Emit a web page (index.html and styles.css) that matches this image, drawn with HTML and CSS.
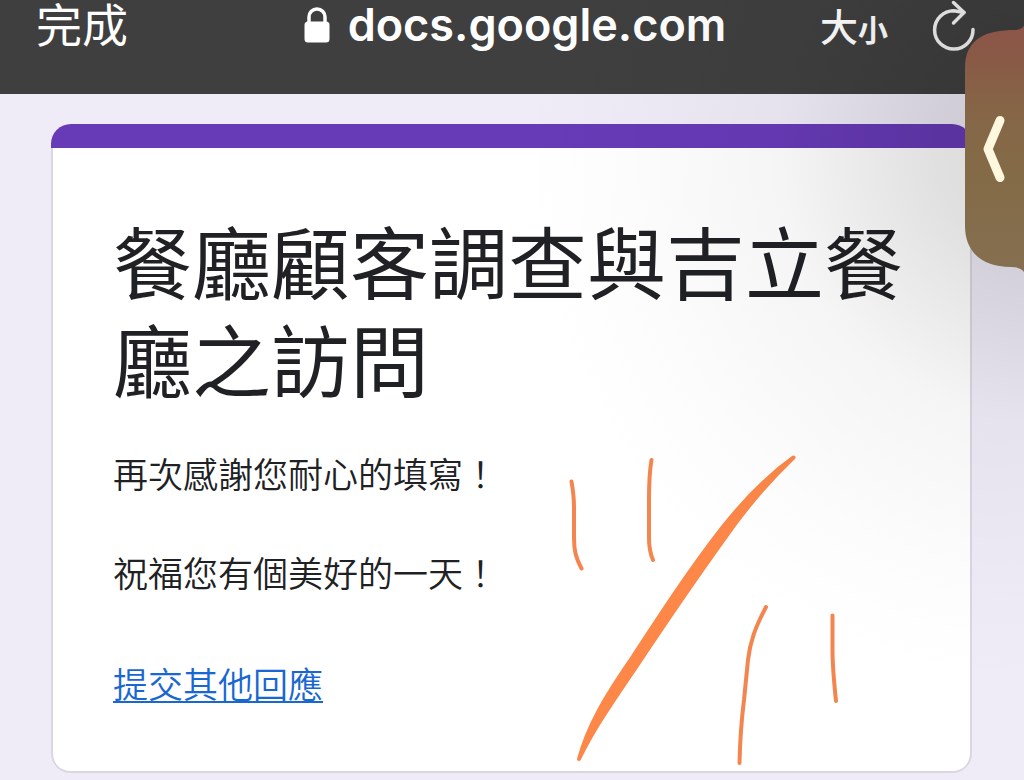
FILE: index.html
```html
<!DOCTYPE html>
<html lang="zh-Hant">
<head>
<meta charset="utf-8">
<meta name="viewport" content="width=device-width, initial-scale=1">
<title>餐廳顧客調查與吉立餐廳之訪問</title>
<link rel="stylesheet" href="styles.css">
</head>
<body>
<header class="browser-bar">
  <button class="bar-button done" type="button">完成</button>
  <div class="address">
    <svg class="lock" width="26" height="36" viewBox="0 0 26 36" aria-hidden="true">
      <path d="M5 17V10a8 8 0 0 1 16 0V17" fill="none" stroke="#fff" stroke-width="3.500"/>
      <rect x="0.500" y="14.500" width="25" height="21" rx="3.500" fill="#fff"/>
    </svg>
    <span class="domain">docs.google.com</span>
  </div>
  <div class="bar-actions">
    <button class="bar-button text-size" type="button">大<span class="small-char">小</span></button>
    <button class="bar-button reload" type="button" aria-label="重新載入">
      <svg width="44" height="52" viewBox="0 3.5 44 52" fill="none" stroke="#f4f4f4" stroke-width="3.500" stroke-linecap="round" stroke-linejoin="round" aria-hidden="true">
        <path d="M41 33A19.200 19.200 0 1 1 22 14.200L32 16"/>
        <path d="M21.500 6L32 16L21.500 26.500"/>
      </svg>
    </button>
  </div>
</header>

<main class="page">
  <section class="card">
    <h1 class="title">餐廳顧客調查與吉立餐廳之訪問</h1>
    <p class="message">再次感謝您耐心的填寫！</p>
    <p class="message">祝福您有個美好的一天！</p>
    <a class="again" href="#">提交其他回應</a>
    <svg class="ink" width="270" height="310" viewBox="568 455 270 310" fill="none" stroke="#f4854f" stroke-width="4" stroke-linecap="round" stroke-linejoin="round" aria-hidden="true">
      <path d="M571.500 481.500C573 490 574 496 574 507V538C574 551 576 558 581.500 568.500"/>
      <path d="M651.500 460C649 474 649 486 649 500V538C649 548 650 553 653 560"/>
      <path d="M766 607C755 628 750 642 748 660L744 700C741 724 740 740 739.500 763"/>
      <path d="M832.500 615.500V650C832.500 667 834 682 836 701"/>
      <path d="M793.500 457.500C766 477 745 499 722 528C690 569 660 615 630 661C604 699 588 726 579 759C592 732 608 708 636 667C666 622 696 578 727 535C749 504 769 481 793.500 457.500Z" fill="#ff8747" stroke="#fb8749" stroke-width="4"/>
    </svg>
  </section>
</main>

<div class="shade"></div>
<button class="side-handle" type="button" aria-label="展開">
  <svg width="59" height="246" viewBox="965 26 59 246" aria-hidden="true">
    <defs>
      <linearGradient id="handle-fill" x1="0" y1="0" x2="0" y2="1">
        <stop offset="0" stop-color="#8d5548"/>
        <stop offset="0.140" stop-color="#895a46"/>
        <stop offset="0.380" stop-color="#856747"/>
        <stop offset="0.620" stop-color="#846b47"/>
        <stop offset="1" stop-color="#846f50"/>
      </linearGradient>
    </defs>
    <path d="M1024 26Q1021 30 1015 30C987 30 965 38 965 68V226C965 250 980 267 1011 267Q1021 267 1024 272Z" fill="url(#handle-fill)"/>
    <path d="M1000 120.500L988 149L1000 177.500" fill="none" stroke="#fff8df" stroke-width="9" stroke-linecap="round" stroke-linejoin="round"/>
  </svg>
</button>
</body>
</html>
```
FILE: styles.css
```css
* {
  box-sizing: border-box;
}

body {
  margin: 0;
  min-height: 100vh;
  position: relative;
  overflow-x: hidden;
  background: #efebf7;
  color: #202124;
  font-family: "Noto Sans CJK TC", sans-serif;
}

.browser-bar {
  display: grid;
  grid-template-columns: 1fr auto 1fr;
  align-items: center;
  height: 94px;
  padding: 0 48px 42px 36px;
  background: #3f3f3f;
  color: #fff;
}

.bar-button {
  padding: 0;
  border: 0;
  background: none;
  color: inherit;
  font-family: inherit;
  cursor: pointer;
}

.done {
  justify-self: start;
  padding-bottom: 8px;
  font-size: 46px;
  font-weight: 400;
  line-height: 44px;
}

.address {
  display: flex;
  align-items: center;
  gap: 18px;
  padding: 0 0 2px 18px;
}

.lock {
  display: block;
}

.domain {
  font-family: Inter, sans-serif;
  font-size: 45px;
  font-weight: 600;
  line-height: 44px;
}

.bar-actions {
  display: flex;
  align-items: center;
  justify-content: flex-end;
  gap: 44px;
}

.text-size {
  font-size: 38px;
  font-weight: 500;
  line-height: 44px;
}

.small-char {
  font-size: 30px;
  font-weight: 700;
}

.reload svg {
  display: block;
}

.page {
  padding: 30px 52px 8px 51px;
}

.card {
  position: relative;
  padding: 63px 62px 65px;
  border-top: 24px solid #673ab7;
  border-radius: 20px;
  background: #fff;
  box-shadow: inset 2px 0 #dad7e0, inset -2px 0 #dad7e0, inset 0 -2px #dad7e0;
}

.title {
  margin: 0 0 41px;
  font-size: 79px;
  font-weight: 400;
  line-height: 98px;
}

.message {
  margin: 0 0 49px;
  font-size: 35px;
  font-weight: 350;
  line-height: 50px;
}

.again {
  display: inline-block;
  margin-top: 12px;
  color: #1967d2;
  font-size: 35px;
  font-weight: 350;
  line-height: 50px;
  text-underline-offset: 3px;
  text-decoration-thickness: 2px;
}

.ink {
  position: absolute;
  right: 134px;
  bottom: 8px;
}

.shade {
  position: absolute;
  inset: 0;
  pointer-events: none;
  background: radial-gradient(ellipse 520px 540px at calc(100% + 16px) 150px, rgba(0, 0, 0, 0.15), rgba(0, 0, 0, 0.12) 20%, rgba(0, 0, 0, 0.04) 50%, rgba(0, 0, 0, 0.01) 80%, transparent);
}

.side-handle {
  position: absolute;
  top: 26px;
  right: 0;
  padding: 0;
  border: 0;
  background: none;
  cursor: pointer;
}

.side-handle svg {
  display: block;
}
```
